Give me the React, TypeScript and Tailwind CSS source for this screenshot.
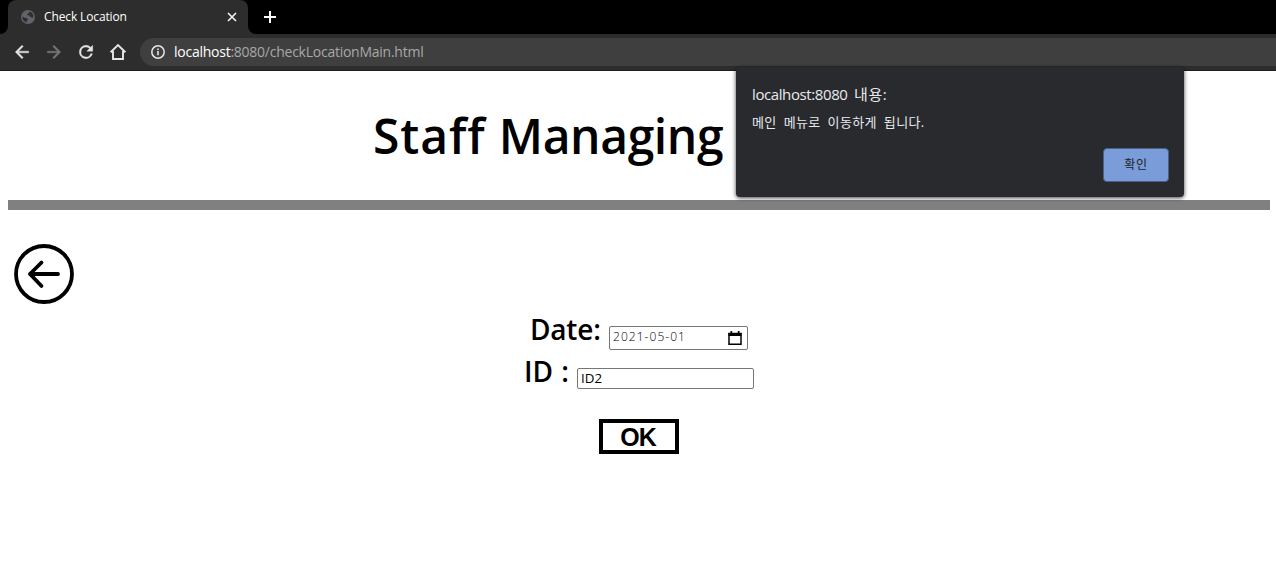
import React from "react";

function GlobeIcon() {
  return (
    <svg className="h-[14px] w-[14px] shrink-0" viewBox="0 0 14 14">
      <circle cx="7" cy="7" r="7" fill="#606469" />
      <path d="M1.6 6.2 3.4 7.8 5.6 7.9 7 9.2 5.8 10.4 5.8 12.4 A5.6 5.6 0 0 1 1.6 6.2Z" fill="#2d2d2d" />
      <path d="M8.2 1.6 8.1 3.2 6.2 3.7 6 5.1 8.3 5.6 9.8 7.3 12.4 7.4 A5.6 5.6 0 0 0 8.2 1.6Z" fill="#2d2d2d" />
    </svg>
  );
}

function MaterialIcon({ d, className }: { d: string; className: string }) {
  return (
    <svg className={className} viewBox="0 0 24 24" fill="currentColor" stroke="currentColor" strokeWidth="0.5">
      <path d={d} />
    </svg>
  );
}

function TabStrip() {
  return (
    <div className="flex h-[34px] bg-black">
      <div className="relative ml-2 flex h-[34px] w-[240px] items-center rounded-t-lg bg-[#2d2d2d] pl-[13px] pr-[11px]">
        <svg className="absolute -left-2 bottom-0 h-2 w-2" viewBox="0 0 8 8"><path d="M8 0V8H0A8 8 0 0 0 8 0Z" fill="#2d2d2d" /></svg>
        <svg className="absolute -right-2 bottom-0 h-2 w-2" viewBox="0 0 8 8"><path d="M0 0V8H8A8 8 0 0 1 0 0Z" fill="#2d2d2d" /></svg>
        <GlobeIcon />
        <span className="ml-[9px] flex-1 whitespace-nowrap text-[12px] leading-4 tracking-[-0.13px] text-white">Check Location</span>
        <svg className="h-[10px] w-[10px]" viewBox="0 0 10 10"><path d="m1 1 8 8M9 1 1 9" stroke="#f1f1f1" strokeWidth="1.7" /></svg>
      </div>
      <svg className="ml-4 mt-[11px] h-3 w-3" viewBox="0 0 12 12"><path d="M6 0v12M0 6h12" stroke="#fff" strokeWidth="2" /></svg>
    </div>
  );
}

function Toolbar() {
  return (
    <div className="flex h-[37px] items-center border-b border-[#1c1c1c] bg-[#2d2d2d] pl-3">
      <MaterialIcon className="h-5 w-5 text-[#e6e6e6]" d="M20 11H7.83l5.59-5.59L12 4l-8 8 8 8 1.41-1.41L7.83 13H20v-2z" />
      <MaterialIcon className="ml-3 h-5 w-5 text-[#777]" d="m12 4-1.41 1.41L16.17 11H4v2h12.17l-5.58 5.59L12 20l8-8z" />
      <MaterialIcon className="ml-3 h-5 w-5 text-[#e6e6e6]" d="M17.65 6.35A7.96 7.96 0 0 0 12 4a8 8 0 1 0 7.73 10h-2.08A6 6 0 1 1 12 6c1.66 0 3.14.69 4.22 1.78L13 11h7V4l-2.35 2.35z" />
      <svg className="ml-3 h-5 w-5" viewBox="0 0 20 20"><path d="M2.6 10.2 10 3l7.4 7.2M5 9v8h10V9" fill="none" stroke="#e6e6e6" strokeWidth="1.9" /></svg>
      <div className="ml-3 flex h-7 flex-1 items-center rounded-l-full bg-[#3f3f3f] pl-[11px]">
        <svg className="h-[14px] w-[14px]" viewBox="0 0 14 14"><circle cx="7" cy="7" r="6.2" fill="none" stroke="#e6e6e6" strokeWidth="1.5" /><path d="M7 6v4.3M7 3.4v1.6" stroke="#e6e6e6" strokeWidth="1.6" /></svg>
        <span className="ml-[9px] whitespace-nowrap text-[14px] leading-5 tracking-[-0.25px] text-[#a8a8a8]"><span className="text-white">localhost</span>:8080/checkLocationMain.html</span>
      </div>
    </div>
  );
}

function AlertDialog() {
  return (
    <div className="absolute left-[736px] top-[67px] flex h-[130px] w-[448px] flex-col rounded-[4px] bg-[#292a2d] pl-4 pr-[15px] pt-[17px] text-[#e8eaed] shadow-[0_1px_4px_rgba(0,0,0,0.75)]">
      <div className="whitespace-nowrap text-[15px] leading-5 tracking-[-0.4px] [word-spacing:3px]">localhost:8080 <span className="tracking-[0.6px]">내용:</span></div>
      <div className="mt-2 whitespace-nowrap text-[13px] leading-5 tracking-[0.35px] [word-spacing:3.3px]">메인 메뉴로 이동하게 됩니다.</div>
      <button className="mt-[16px] flex h-[34px] w-[66px] shrink-0 items-center justify-center self-end rounded-[4px] border border-[#49618a] bg-[#7a9dd9] pb-[1px] text-[12px] tracking-[0.6px] text-[#202124]">확인</button>
    </div>
  );
}

export default function App() {
  return (
    <div className="relative h-[584px] w-[1276px] overflow-hidden bg-white font-['Open_Sans','Noto_Sans_CJK_KR',sans-serif] text-black">
      <TabStrip />
      <Toolbar />
      <main>
        <h1 className="ml-[373px] mt-[32px] h-[97px] whitespace-nowrap text-[48px] font-semibold leading-[65px] tracking-[-0.4px]"><span className="tracking-[0.9px]">Staff </span>Managing</h1>
        <div className="ml-2 mr-[6px] h-[10px] bg-[#808080]" />
        <svg className="ml-[14px] mt-[34px] h-[60px] w-[60px]" viewBox="0 0 60 60" fill="none" stroke="#000" strokeWidth="3.8">
          <circle cx="30" cy="30" r="28" />
          <path d="M44 30H16M27.5 18.500 16 30l11.500 12" strokeLinecap="round" strokeLinejoin="round" />
        </svg>
        <div className="ml-[530px] mt-[5px] flex h-[42px] items-start">
          <label className="w-[79px] whitespace-nowrap text-[28px] font-semibold leading-10 tracking-[-0.2px]">Date:</label>
          <div className="mt-[17px] flex h-6 w-[139px] items-center rounded-[2px] border border-[#767676] pl-[3px] pr-[5px]">
            <span className="flex-1 whitespace-nowrap pb-[3px] text-[12px] font-light leading-4 tracking-[1.05px]">2021-05-01</span>
            <svg className="h-[14px] w-[14px]" viewBox="0 0 14 14"><path d="M1 2.5h12v10.8H1z" fill="none" stroke="#000" strokeWidth="1.5" /><path d="M.5 2h13v3H.5zM2.500 0h1.700v2H2.500zM9.800 0h1.700v2H9.800z" /></svg>
          </div>
        </div>
        <div className="ml-[524px] flex h-[42px] items-start">
          <label className="w-[53px] whitespace-nowrap text-[28px] font-semibold leading-10 [word-spacing:1px]">ID :</label>
          <div className="mt-[17px] flex h-[21px] w-[177px] items-center rounded-[2px] border border-[#767676] pb-[2px] pl-[3px] text-[13.333px] leading-4">ID2</div>
        </div>
        <button className="ml-[599px] mt-[26px] flex h-[35px] w-[80px] items-center justify-center border-[4px] border-black pr-[2px] font-['Liberation_Sans',sans-serif] text-[25px] font-bold leading-6 tracking-[-1px]">OK</button>
      </main>
      <AlertDialog />
    </div>
  );
}
